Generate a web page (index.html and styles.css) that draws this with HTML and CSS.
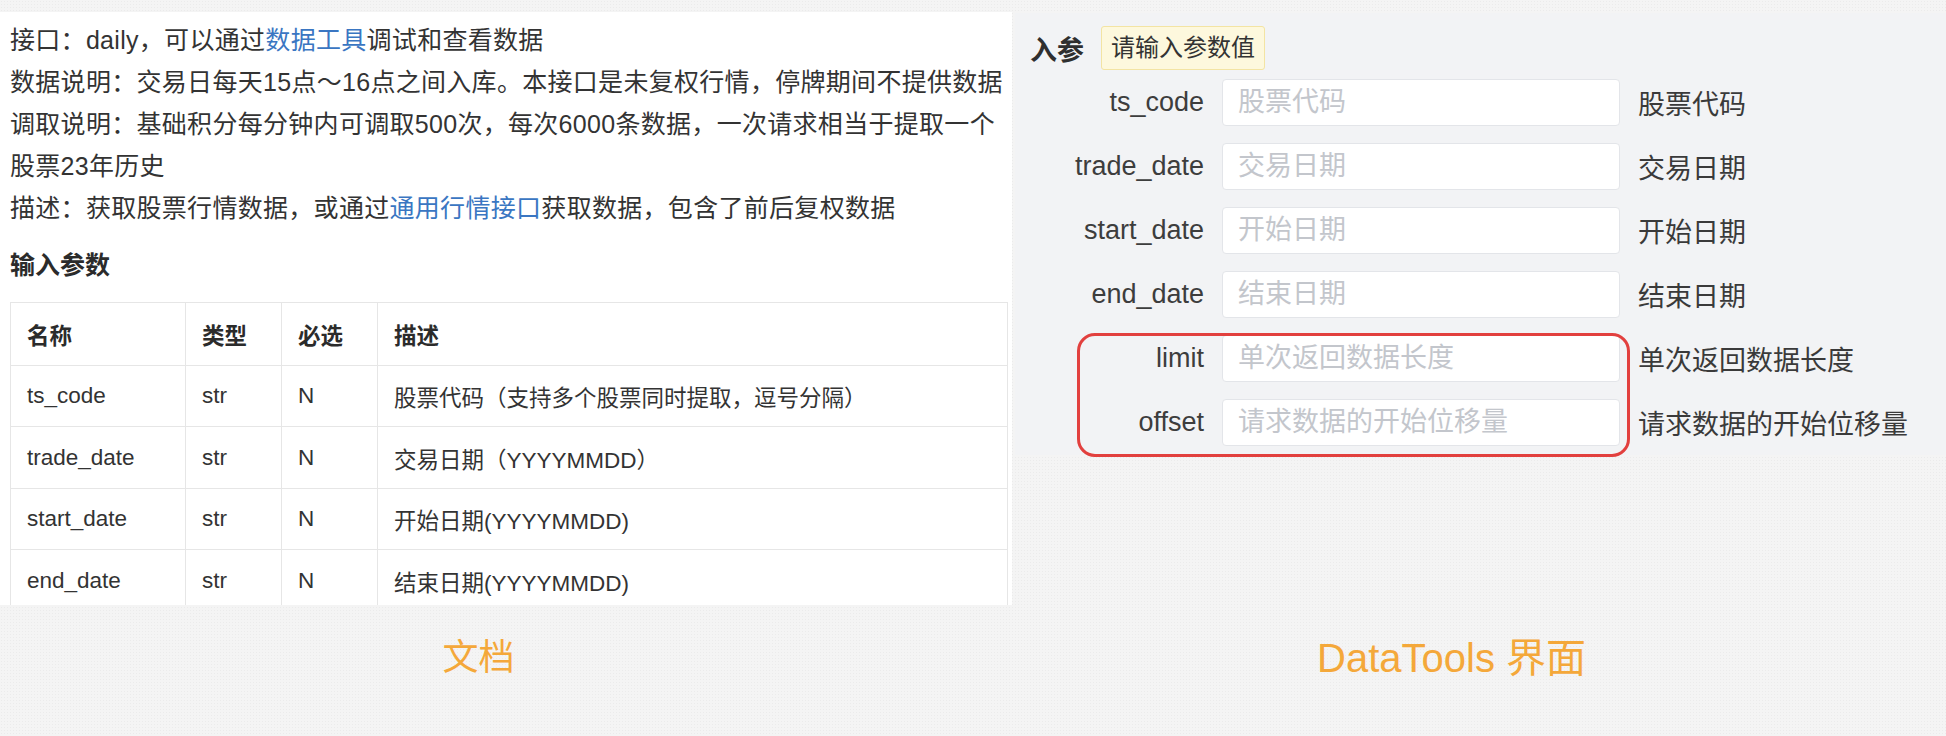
FILE: index.html
```html
<!DOCTYPE html>
<html lang="zh-CN">
<head>
<meta charset="utf-8">
<title>文档 / DataTools 界面</title>
<link rel="stylesheet" href="styles.css">
</head>
<body>
<div class="top-strip"></div>
<div class="shots">
  <section class="doc">
    <div class="intro">
      <p>接口：daily，可以通过<a class="link">数据工具</a>调试和查看数据</p>
      <p>数据说明：交易日每天15点～16点之间入库。本接口是未复权行情，停牌期间不提供数据</p>
      <p>调取说明：基础积分每分钟内可调取500次，每次6000条数据，一次请求相当于提取一个股票23年历史</p>
      <p>描述：获取股票行情数据，或通过<a class="link">通用行情接口</a>获取数据，包含了前后复权数据</p>
    </div>
    <h3 class="heading">输入参数</h3>
    <table class="params">
      <colgroup>
        <col class="c-name"><col class="c-type"><col class="c-req"><col class="c-desc">
      </colgroup>
      <thead>
        <tr><th>名称</th><th>类型</th><th>必选</th><th>描述</th></tr>
      </thead>
      <tbody>
        <tr class="r1"><td>ts_code</td><td>str</td><td>N</td><td>股票代码（支持多个股票同时提取，逗号分隔）</td></tr>
        <tr class="r2"><td>trade_date</td><td>str</td><td>N</td><td>交易日期（YYYYMMDD）</td></tr>
        <tr class="r3"><td>start_date</td><td>str</td><td>N</td><td>开始日期(YYYYMMDD)</td></tr>
        <tr class="r4"><td>end_date</td><td>str</td><td>N</td><td>结束日期(YYYYMMDD)</td></tr>
      </tbody>
    </table>
  </section>
  <section class="tool">
    <div class="tool-head">
      <span class="tool-title">入参</span>
      <span class="badge">请输入参数值</span>
    </div>
    <div class="form">
      <label class="lbl">ts_code</label><input class="field" placeholder="股票代码"><span class="desc">股票代码</span>
      <label class="lbl">trade_date</label><input class="field" placeholder="交易日期"><span class="desc">交易日期</span>
      <label class="lbl">start_date</label><input class="field" placeholder="开始日期"><span class="desc">开始日期</span>
      <label class="lbl">end_date</label><input class="field" placeholder="结束日期"><span class="desc">结束日期</span>
      <label class="lbl">limit</label><input class="field" placeholder="单次返回数据长度"><span class="desc">单次返回数据长度</span>
      <label class="lbl">offset</label><input class="field" placeholder="请求数据的开始位移量"><span class="desc">请求数据的开始位移量</span>
    </div>
    <div class="highlight"></div>
  </section>
</div>
<div class="captions">
  <div class="cap cap-doc"><span class="cap-text cap-text-doc">文档</span></div>
  <div class="cap cap-tool"><span class="cap-text cap-text-tool">DataTools 界面</span></div>
</div>
</body>
</html>
```

FILE: styles.css
```css
html, body {
  margin: 0;
  padding: 0;
}
body {
  width: 1946px;
  height: 736px;
  overflow: hidden;
  font-family: "Liberation Sans", "Noto Sans CJK SC", sans-serif;
  color: #333;
  background-color: #f4f4f4;
  background-image: radial-gradient(circle, #ebebeb 0.7px, transparent 0.9px);
  background-size: 3px 3px;
}
.top-strip {
  height: 12px;
}
.shots {
  display: flex;
  align-items: flex-start;
}
.doc {
  width: 1012px;
  height: 593px;
  flex: none;
  box-sizing: border-box;
  padding: 7px 0 0 10px;
  background: #fff;
  overflow: hidden;
}
.intro {
  width: 1000px;
  font-size: 25px;
  letter-spacing: 0.3px;
  line-height: 42px;
  color: #333;
}
.intro p {
  margin: 0;
}
.link {
  color: #3a76c2;
  text-decoration: none;
}
.heading {
  margin: 15px 0 0 0;
  font-size: 25px;
  line-height: 42px;
  font-weight: bold;
  color: #2b2b2b;
}
.params {
  margin-top: 16px;
  width: 997px;
  border-collapse: collapse;
  table-layout: fixed;
  font-size: 22.5px;
  color: #333;
}
.c-name { width: 175px; }
.c-type { width: 96px; }
.c-req { width: 96px; }
.c-desc { width: 630px; }
.params th,
.params td {
  border: 1px solid #e6e6e6;
  padding: 0 0 0 16px;
  text-align: left;
  white-space: nowrap;
}
.params th {
  height: 62px;
  font-weight: bold;
  color: #2b2b2b;
}
.params td {
  height: 60px;
}
.params .r2 td { height: 61px; }
.params .r3 td { height: 60px; }
.params .r4 td { height: 62px; }

.tool {
  position: relative;
  flex: 1;
  margin: 1px 0 0 3px;
  height: 442px;
  box-sizing: border-box;
  padding: 13px 0 0 15px;
  background: #f2f3f5;
}
.tool-head {
  display: flex;
  align-items: center;
  gap: 17px;
  height: 44px;
}
.tool-title {
  font-size: 27px;
  font-weight: bold;
  color: #2f2f2f;
}
.badge {
  box-sizing: border-box;
  height: 44px;
  line-height: 41px;
  padding: 0 9px;
  font-size: 24px;
  color: #333;
  background: #fdf8dd;
  border: 1.5px solid #f3e4a3;
  border-radius: 3px;
}
.form {
  margin-top: 9px;
  display: grid;
  grid-template-columns: 174px 398px auto;
  grid-auto-rows: 47px;
  column-gap: 18px;
  row-gap: 17px;
  align-items: center;
}
.lbl {
  text-align: right;
  font-size: 27px;
  color: #3d3d3d;
  line-height: 47px;
}
.field {
  box-sizing: border-box;
  width: 398px;
  height: 47px;
  margin: 0;
  padding: 0 15px;
  border: 1px solid #e3e5e9;
  border-radius: 4px;
  background: #fff;
  font-family: "Liberation Sans", "Noto Sans CJK SC", sans-serif;
  font-size: 27px;
  color: #333;
  outline: none;
}
.field::placeholder {
  color: #c3c6cc;
}
.desc {
  font-size: 27px;
  color: #3a3a3a;
  white-space: nowrap;
}
.highlight {
  position: absolute;
  left: 62px;
  top: 320px;
  width: 553px;
  height: 124px;
  box-sizing: border-box;
  border: 3px solid #e2403e;
  border-radius: 18px;
  pointer-events: none;
}

.captions {
  display: flex;
  padding-top: 28px;
}
.cap {
  text-align: center;
  height: 50px;
  line-height: 50px;
}
.cap-doc { width: 960px; }
.cap-tool { width: 992px; }
.cap-text {
  color: #f4a83a;
}
.cap-text-doc {
  font-size: 36px;
}
.cap-text-tool {
  font-size: 40px;
}
```
